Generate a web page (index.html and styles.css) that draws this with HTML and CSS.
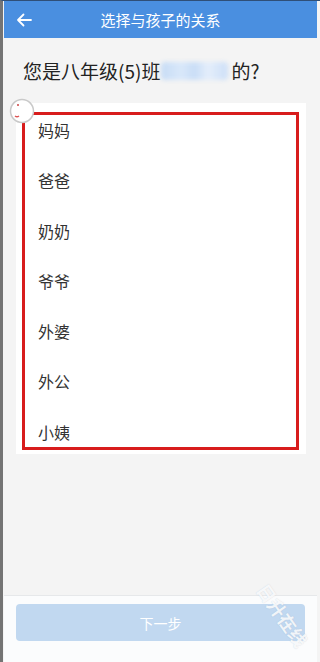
FILE: index.html
```html
<!DOCTYPE html>
<html lang="zh">
<head>
<meta charset="utf-8">
<title>选择与孩子的关系</title>
<link rel="stylesheet" href="styles.css">
</head>
<body>
<div class="app">
  <header class="topbar">
    <svg class="back" width="16" height="14" viewBox="0 0 16 14"><path d="M15 7H2M7.5 1.5 2 7l5.5 5.5" fill="none" stroke="#fff" stroke-width="1.8" stroke-linecap="round" stroke-linejoin="round"/></svg>
    <h1 class="title">选择与孩子的关系</h1>
  </header>
  <main class="main">
    <p class="question">您是八年级(5)班<span class="blur"></span>的?</p>
    <div class="card">
      <ul class="list">
        <li>妈妈</li>
        <li>爸爸</li>
        <li>奶奶</li>
        <li>爷爷</li>
        <li>外婆</li>
        <li>外公</li>
        <li>小姨</li>
      </ul>
    </div>
    <svg class="touch" width="26" height="26" viewBox="0 0 26 26"><circle cx="13" cy="13" r="11.5" fill="#fff" stroke="#c9c9c9" stroke-width="1.5"/><circle cx="9" cy="7" r="1" fill="#c44"/><path d="M6 18q2 1.5 4 0" stroke="#d55" stroke-width="1.4" fill="none"/></svg>
  </main>
  <footer class="footer">
    <button class="next">下一步</button>
  </footer>
  <span class="mark">日升在线</span>
</div>
</body>
</html>
```
FILE: styles.css
```css
html, body { margin: 0; padding: 0; }
body {
  width: 320px;
  height: 662px;
  overflow: hidden;
  font-family: "Noto Sans CJK SC", "Noto Sans", sans-serif;
  background: #f4f4f4;
}
.app {
  position: relative;
  height: 661px;
  border-top: 1px solid #2f4f78;
  border-left: 3px solid #747474;
  padding-left: 1px;
  padding-right: 3px;
  display: flex;
  flex-direction: column;
  background: #f4f4f4;
}
.topbar {
  height: 37px;
  background: #4a8fe0;
  display: flex;
  align-items: center;
  position: relative;
  flex: none;
}
.back { margin-left: 12px; margin-top: 1px; }
.title {
  position: absolute;
  left: 0; right: 0; top: 0;
  margin: 0;
  text-align: center;
  line-height: 37px;
  font-size: 15px;
  font-weight: normal;
  color: #fff;
}
.main {
  flex: 1;
  position: relative;
  padding-top: 20px;
}
.question {
  margin: 0 0 0 19px;
  font-size: 19px;
  line-height: 26px;
  color: #222;
  display: flex;
  align-items: center;
}
.blur {
  display: inline-block;
  width: 67px;
  height: 18px;
  margin: 0 3px 0 1px;
  background: linear-gradient(90deg, #c7dcf5 0%, #d9e8fa 30%, #c9ddf6 50%, #e4eefb 70%, #cddff7 100%);
  filter: blur(2px);
  border-radius: 4px;
}
.card {
  margin: 19px 11px 0 12px;
  background: #fff;
  padding: 9px 7px 4px 6px;
}
.list {
  list-style: none;
  margin: 0;
  padding: 4px 0 4px 13px;
  border: 3px solid #d81c1c;
  display: flex;
  flex-direction: column;
  gap: 28.3px;
}
.list li {
  font-size: 16px;
  line-height: 22px;
  color: #333;
}
.touch {
  position: absolute;
  left: 5px;
  top: 60px;
}
.footer {
  flex: none;
  height: 58px;
  border-top: 1px solid #e6e8ea;
  background: #fbfcfd;
  padding: 8px 12px 0 12px;
}
.next {
  display: block;
  width: 100%;
  height: 37px;
  border: none;
  border-radius: 4px;
  background: #c1d8f0;
  color: #fff;
  font-family: inherit;
  font-size: 14px;
}
.mark {
  position: absolute;
  left: 240px;
  top: 603px;
  width: 80px;
  text-align: center;
  transform: rotate(55deg);
  font-size: 18px;
  line-height: 22px;
  font-weight: bold;
  color: rgba(255,255,255,0.85);
  text-shadow: 0 0 1px rgba(120,140,170,0.35);
  white-space: nowrap;
  pointer-events: none;
}
```
